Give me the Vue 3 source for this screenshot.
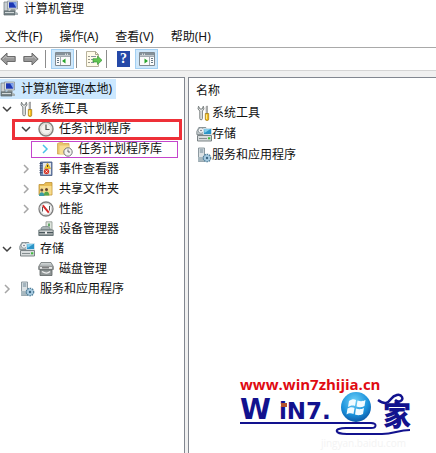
<template>
  <div class="window">
    <svg class="defs" aria-hidden="true">
      <defs>
        <linearGradient id="metal" x1="0" y1="0" x2="0" y2="1">
          <stop offset="0" stop-color="#d9dcdc" />
          <stop offset="1" stop-color="#7f8889" />
        </linearGradient>
        <radialGradient id="orb" cx="0.45" cy="0.3" r="0.75">
          <stop offset="0" stop-color="#6fd0f8" />
          <stop offset="0.6" stop-color="#1b93dc" />
          <stop offset="1" stop-color="#0a4f9e" />
        </radialGradient>
      </defs>
      <symbol id="i-computer" viewBox="0 0 16 16">
        <path d="M1 2h4v9H1z" fill="#c9cfd2" stroke="#7c878c" stroke-width=".8" />
        <path d="M4.500 1h10v8h-10z" fill="#d9dee2" stroke="#8b9499" stroke-width=".8" />
        <path d="M6 2.300h7.300v5.400H6z" fill="#1c37b4" />
        <path d="M10 2.300h3.300v5.400z" fill="#7fa6ee" />
        <path d="M8 9h4l1 2H7z" fill="#9aa3a6" />
        <path d="M1 11h11v4H1z" fill="#79868a" stroke="#566266" stroke-width=".7" />
        <path d="M2 12.500h9" stroke="#d3dadb" />
        <path d="M12 11.500l3 1.500v2h-3z" fill="#a6b0b3" />
      </symbol>
      <symbol id="i-tools" viewBox="0 0 16 16">
        <path d="M2.500 1.200L2 4l1.800 2v7.500a1.300 1.300 0 0 0 2.600 0V6L8 4 7.300 1.200 6.200 4H4z" fill="#e3e5e5" stroke="#6f7676" stroke-width=".9" />
        <path d="M10 1.500l1.500-.5v8h-1.300z" fill="#b9bdbd" stroke="#777" stroke-width=".5" />
        <path d="M9.300 8.500h3.400v5.700a1.700 1.300 0 0 1-3.400 0z" fill="#f3bd1d" stroke="#9f7610" stroke-width=".7" />
        <path d="M10.500 9.500v4.500" stroke="#ffe98a" />
      </symbol>
      <symbol id="i-clock" viewBox="0 0 16 16">
        <circle cx="8" cy="8" r="7" fill="#f3f2ed" stroke="#85837d" stroke-width="1.500" />
        <circle cx="8" cy="8" r="5.400" fill="none" stroke="#cfccc4" stroke-width=".7" />
        <path d="M8 3.500V8.500h3.500" fill="none" stroke="#55534f" stroke-width="1.200" />
      </symbol>
      <symbol id="i-folderclock" viewBox="0 0 16 16">
        <path d="M.5 2.500l4-1.500 2 1.500h5.500V13H.5z" fill="#e9c46b" stroke="#c89c46" stroke-width=".7" />
        <path d="M2.500 4.500h10V13.500l-10-.3z" fill="#f7dc92" />
        <circle cx="11" cy="11" r="4.200" fill="#f3f3f0" stroke="#74777a" />
        <path d="M11 8.500V11h2" fill="none" stroke="#55585c" stroke-width=".9" />
      </symbol>
      <symbol id="i-event" viewBox="0 0 16 16">
        <path d="M2.500 1h11.500v13.500H2.500z" fill="#7189b5" stroke="#42577e" stroke-width=".8" />
        <path d="M5 2h8v11.500H5z" fill="#e4e6e8" />
        <path d="M1.500 2.500h3M1.500 4.800h3M1.500 7.100h3M1.500 9.400h3M1.500 11.700h3" stroke="#34486d" stroke-width=".9" />
        <path d="M9.500 2l3.200 5.500H6.500z" fill="#f7cb22" stroke="#bd9016" stroke-width=".5" />
        <path d="M9.600 4v2" stroke="#333" />
        <circle cx="8.500" cy="10.500" r="2.700" fill="#d8392c" />
        <path d="M7.500 9.500l2 2M9.500 9.500l-2 2" stroke="#fff" stroke-width=".8" />
      </symbol>
      <symbol id="i-shared" viewBox="0 0 16 16">
        <path d="M1 3.500h5l1.500-2h6.500V14H1z" fill="#e8bd55" stroke="#bd9238" stroke-width=".8" />
        <path d="M2 5h11.500v8.500H2z" fill="#f6db8d" />
        <circle cx="3.800" cy="9" r="1.500" fill="#6b5137" />
        <path d="M1 15c0-5 5.500-5 5.500 0z" fill="#3b9ca5" />
        <circle cx="8.500" cy="8.500" r="1.500" fill="#674633" />
        <path d="M5.800 14.500c0-5.500 5.500-5.500 5.500 0z" fill="#56a64b" />
      </symbol>
      <symbol id="i-perf" viewBox="0 0 16 16">
        <circle cx="8" cy="8" r="7" fill="#fff" stroke="#7e7e7e" stroke-width="1.300" />
        <circle cx="8" cy="8" r="5.600" fill="none" stroke="#b9b9b9" stroke-width=".6" />
        <path d="M4.500 10.500V6M11.500 9.500V5" fill="none" stroke="#555" stroke-width="1" />
        <path d="M4.800 4.300l6 7.400" stroke="#d62727" stroke-width="2" />
      </symbol>
      <symbol id="i-device" viewBox="0 0 16 16">
        <path d="M8 .8h6v8H8z" fill="#dfe5de" stroke="#8b958e" stroke-width=".8" />
        <path d="M10 2.500h2v3h-2z" fill="#65a86b" />
        <path d="M3 7l2-1.500h5L12 7v2H3z" fill="#a8b2b4" stroke="#78868a" stroke-width=".7" />
        <path d="M.8 9h14.400v5.500H.8z" fill="url(#metal)" stroke="#566468" stroke-width=".8" />
        <path d="M1 11.500h14" stroke="#49575b" />
        <path d="M7 10.500h2v2.500H7z" fill="#eee" />
      </symbol>
      <symbol id="i-storage" viewBox="0 0 16 16">
        <path d="M.8 5.500l2-4h7l2 4v3h-11z" fill="#c7ccce" stroke="#737f83" stroke-width=".8" />
        <circle cx="5" cy="4.500" r="2.800" fill="#f0f2f3" stroke="#78868c" stroke-width=".7" />
        <circle cx="5" cy="4.500" r=".8" fill="#667" />
        <path d="M7.500 2.500h8v6h-8z" fill="#2b94c7" stroke="#dfe9ee" stroke-width=".8" />
        <path d="M8 3h6.500l-6 4z" fill="#83cdec" />
        <path d="M1.500 9.500h14v5.500h-14z" fill="#d8dcdd" stroke="#6d7679" stroke-width=".9" />
        <path d="M3 12.500h8" stroke="#858e90" />
        <path d="M12 11.300h2.300v2H12z" fill="#3fbb3c" />
      </symbol>
      <symbol id="i-disk" viewBox="0 0 16 16">
        <path d="M3 1.500h10l2.300 4v3H.7v-3z" fill="url(#metal)" stroke="#6d7373" stroke-width=".8" />
        <path d="M1.500 5.500h13v2.800h-13z" fill="#e5e7e6" stroke="#777" stroke-width=".6" />
        <path d="M4 6.800h7" stroke="#555" />
        <path d="M2 8.800h12v5.700H2z" fill="#8f9595" stroke="#5c6262" stroke-width=".8" />
        <path d="M4 10.500c3 2 6 2 8 0" fill="none" stroke="#eee" stroke-width="1.300" />
      </symbol>
      <symbol id="i-service" viewBox="0 0 16 16">
        <path d="M2.500 1h6v13.500h-6z" fill="#dbe1e4" stroke="#75848c" stroke-width=".8" />
        <path d="M3.800 3h3.500M3.800 5h3.500" stroke="#6d8796" />
        <path d="M2 10h6v4.500H2z" fill="#a8b8bf" />
        <circle cx="11" cy="11" r="3.600" fill="#b7d5e7" stroke="#51809c" stroke-width="1.500" stroke-dasharray="1.600 .7" />
        <circle cx="11" cy="11" r="2.700" fill="#a7cbe2" />
        <circle cx="11" cy="11" r="1.200" fill="#3b6580" />
      </symbol>
      <symbol id="i-arrow" viewBox="0 0 16 14">
        <path d="M.8 7L7 1v3.500h8.200v5H7V13z" fill="#989898" stroke="#6c6c6c" />
        <path d="M3 7l3-3v1.700h8" fill="none" stroke="#bcbcbc" stroke-width=".9" />
      </symbol>
      <symbol id="i-panel" viewBox="0 0 16 14">
        <path d="M.5 .5h15v13H.5z" fill="#fbfbfb" stroke="#808a91" />
        <path d="M1 1h14v2.500H1z" fill="#84919a" />
        <path d="M10 2.200h1M12 2.200h1" stroke="#fff" />
        <path d="M1 4.500h14M5.500 5v8" stroke="#8b979e" stroke-width=".8" />
        <path d="M2 6.500h2M2 8.500h2M2 10.500h2" stroke="#687b87" />
        <path d="M7 9l3.500-2.500v5z" fill="#25a52b" />
      </symbol>
      <symbol id="i-export" viewBox="0 0 18 18">
        <path d="M1.500 1.500h9l3 3v12h-12z" fill="#fffbe9" stroke="#b8b29c" />
        <path d="M10.500 1.500v3h3" fill="none" stroke="#a8a28c" />
        <path d="M3.500 6.500h1M3.500 9.500h1M3.500 12.500h1" stroke="#333" />
        <path d="M6 6.500h5M6 9.500h3M6 12.500h3" stroke="#8992a0" />
        <path d="M8 8.700h4.500V6L17 10.300l-4.500 4.200V12H8z" fill="#62c650" stroke="#36963a" stroke-width=".7" />
      </symbol>
    </svg>

    <header class="titlebar">
      <svg class="icon"><use href="#i-computer" /></svg>
      <span>计算机管理</span>
    </header>

    <nav class="menubar">
      <button v-for="menu in menus" :key="menu" type="button">{{ menu }}</button>
    </nav>

    <div class="toolbar">
      <button type="button" class="nav" aria-label="后退">
        <svg class="arrow"><use href="#i-arrow" /></svg>
      </button>
      <button type="button" class="nav" aria-label="前进">
        <svg class="arrow flip"><use href="#i-arrow" /></svg>
      </button>
      <i class="sep"></i>
      <button type="button" class="tool on" aria-label="显示/隐藏控制台树">
        <svg class="panel"><use href="#i-panel" /></svg>
      </button>
      <i class="sep tight"></i>
      <button type="button" class="tool" aria-label="导出列表">
        <svg class="export"><use href="#i-export" /></svg>
      </button>
      <i class="sep"></i>
      <button type="button" class="tool help" aria-label="帮助"><span>?</span></button>
      <button type="button" class="tool on" aria-label="显示/隐藏操作窗格">
        <svg class="panel flip"><use href="#i-panel" /></svg>
      </button>
    </div>

    <main class="panes">
      <ul class="tree">
        <li
          v-for="node in tree"
          :key="node.name"
          :class="['node', 'level' + node.level, node.mark]"
        >
          <div v-if="node.level" class="twisty">
            <button v-if="node.state" type="button" class="toggle" :aria-label="node.name">
              <svg :class="['chevron', node.state]" viewBox="0 0 10 10">
                <path v-if="node.state === 'open'" d="M1 3l4 4 4-4" />
                <path v-else d="M3 1l4 4-4 4" />
              </svg>
            </button>
          </div>
          <a href="#" class="label" :class="{ selected: !node.level }">
            <svg class="icon"><use :href="'#i-' + node.icon" /></svg>
            <span>{{ node.name }}</span>
          </a>
        </li>
      </ul>

      <section class="list">
        <h2>名称</h2>
        <a v-for="item in items" :key="item.name" href="#" class="item">
          <svg class="icon"><use :href="'#i-' + item.icon" /></svg>
          <span>{{ item.name }}</span>
        </a>
      </section>
    </main>

    <div class="brand">
      <div class="url">www.win7zhijia.cn</div>
      <div class="logo">
        <span class="big">W</span>
        <span class="small">iN7</span>
        <span class="small">.</span>
        <span class="home">家</span>
        <svg class="art" viewBox="0 0 176 46">
          <path d="M41 8h6v4h-6z" fill="#b5522d" />
          <circle cx="116" cy="12" r="15" fill="url(#orb)" />
          <path d="M109 6c3-2 5-2 7-1l-1 6c-3-1-5 0-7 1zM117.500 5.500c3 1 5 1 8-.5l-1 6c-3 1.500-5 1.500-8 .5zM107.500 13.500c3-1.500 5-1.500 7-.5l-1 6c-2-1-5-1-7 .5zM116 13.500c3 1 5 1 8-.5l-1 6c-3 1.500-5 1.500-8 .5z" fill="#f1fbff" />
          <path d="M0 28h131c6 0 6 5 0 5h-25c-13 0-12 6 1 6h35c12 0 16-4 28-4" fill="none" stroke="#12128e" stroke-width="2" />
          <path d="M138 5c7 5 10 3 13-1s9-6 11-2-4 6-7 3" fill="none" stroke="#12128e" stroke-width="2.500" />
        </svg>
      </div>
      <div class="ghost">jingyan.baidu.com</div>
    </div>
  </div>
</template>

<script setup>
const menus = ['文件(F)', '操作(A)', '查看(V)', '帮助(H)']

const tree = [
  { name: '计算机管理(本地)', level: 0, icon: 'computer' },
  { name: '系统工具', level: 1, icon: 'tools', state: 'open' },
  { name: '任务计划程序', level: 2, icon: 'clock', state: 'open', mark: 'mark-red' },
  { name: '任务计划程序库', level: 3, icon: 'folderclock', state: 'hot', mark: 'mark-purple' },
  { name: '事件查看器', level: 2, icon: 'event', state: 'closed' },
  { name: '共享文件夹', level: 2, icon: 'shared', state: 'closed' },
  { name: '性能', level: 2, icon: 'perf', state: 'closed' },
  { name: '设备管理器', level: 2, icon: 'device' },
  { name: '存储', level: 1, icon: 'storage', state: 'open' },
  { name: '磁盘管理', level: 2, icon: 'disk' },
  { name: '服务和应用程序', level: 1, icon: 'service', state: 'closed' }
]

const items = [
  { name: '系统工具', icon: 'tools' },
  { name: '存储', icon: 'storage' },
  { name: '服务和应用程序', icon: 'service' }
]
</script>

<style>
body {
  margin: 0;
}
</style>

<style scoped>
.window {
  position: relative;
  display: flex;
  flex-direction: column;
  min-height: 100vh;
  overflow: hidden;
  background: #fff;
  color: #111;
  font: 12px/18px "Noto Sans", "Noto Sans CJK SC", sans-serif;
}
.defs {
  position: absolute;
  width: 0;
  height: 0;
}
button {
  padding: 0;
  border: 0;
  background: none;
  color: inherit;
  font: inherit;
}
a {
  color: inherit;
  text-decoration: none;
}
.icon {
  flex: none;
  width: 16px;
  height: 16px;
}
.titlebar {
  display: flex;
  gap: 5px;
  height: 26px;
  padding-left: 3px;
}
.menubar {
  display: flex;
  gap: 17px;
  height: 21px;
  padding-left: 5px;
  border-bottom: 1px solid #a9a9a9;
}
.toolbar {
  display: flex;
  align-items: center;
  height: 22px;
  border-bottom: 1px solid #d5d5d5;
}
.nav {
  display: flex;
  margin-right: 7px;
}
.nav + .nav {
  margin-right: 6px;
}
.arrow {
  width: 16px;
  height: 14px;
}
.flip {
  transform: scaleX(-1);
}
.sep {
  flex: none;
  width: 1px;
  height: 18px;
  margin-right: 5px;
  background: #8c8c8c;
}
.sep.tight {
  margin: 0 4px 0 2px;
}
.tool {
  display: flex;
  align-items: center;
  justify-content: center;
  width: 25px;
  height: 20px;
}
.tool.on {
  box-sizing: border-box;
  width: 23px;
  border: 1px solid #a3d0f3;
  background: #cfe8fb;
}
.panel {
  width: 16px;
  height: 14px;
}
.export {
  width: 18px;
  height: 18px;
}
.help {
  width: 23px;
}
.help span {
  width: 13px;
  height: 16px;
  background: #2549a8;
  color: #fff;
  font: bold 14px/16px "Liberation Serif", serif;
}
.panes {
  display: flex;
  flex: 1;
  gap: 3px;
  padding-top: 6px;
  background: #f0f0f0;
}
.tree {
  box-sizing: border-box;
  flex: 0 0 185px;
  margin: 0;
  padding: 1px 0 0;
  border: solid #828790;
  border-width: 1px 1px 0 0;
  background: #fff;
  list-style: none;
}
.node {
  position: relative;
  display: flex;
  align-items: center;
  height: 20px;
}
.level1 {
  padding-left: 2px;
}
.level2 {
  padding-left: 21px;
}
.level3 {
  padding-left: 40px;
}
.twisty {
  width: 17px;
}
.toggle {
  display: flex;
}
.chevron {
  width: 10px;
  height: 10px;
  fill: none;
  stroke: #a6a6a6;
  stroke-width: 1.5;
}
.chevron.open {
  stroke: #404040;
}
.chevron.hot {
  stroke: #4cc3e8;
}
.label {
  display: flex;
  align-items: center;
  gap: 5px;
  height: 20px;
  white-space: nowrap;
}
.selected {
  padding-right: 4px;
  background: #cce8ff;
}
.mark-red::after,
.mark-purple::after {
  content: "";
  position: absolute;
  pointer-events: none;
}
.mark-red::after {
  inset: 0 2px -1px 12px;
  border: 3px solid #ee3038;
}
.mark-purple::after {
  inset: 2px 6px 1px 31px;
  border: 1px solid #c545cc;
}
.list {
  flex: 1;
  padding: 2px 0 0 7px;
  border: solid #828790;
  border-width: 1px 0 0 1px;
  background: #fff;
}
h2 {
  margin: 0;
  font: inherit;
  line-height: 22px;
}
.item {
  display: flex;
  align-items: center;
  height: 21px;
}
.brand {
  position: absolute;
  right: 20px;
  bottom: 4px;
  width: 176px;
}
.url {
  margin-bottom: 2px;
  color: #e00b12;
  font: bold 15px/18px "Open Sans", sans-serif;
}
.logo {
  position: relative;
  display: flex;
  align-items: baseline;
  height: 42px;
  color: #12128e;
  font: bold 23px/30px "DejaVu Sans", sans-serif;
}
.big {
  margin-right: 8px;
  font-size: 28px;
}
.home {
  align-self: flex-start;
  margin-left: auto;
  padding: 6px 5px 0 0;
  font: 900 28px/26px "Noto Sans CJK SC", sans-serif;
}
.ghost {
  padding-right: 10px;
  color: #f3f3f3;
  font: 10px/12px "Open Sans", sans-serif;
  text-align: right;
}
.art {
  position: absolute;
  top: 0;
  left: 0;
  width: 176px;
  height: 46px;
  overflow: visible;
}
</style>
